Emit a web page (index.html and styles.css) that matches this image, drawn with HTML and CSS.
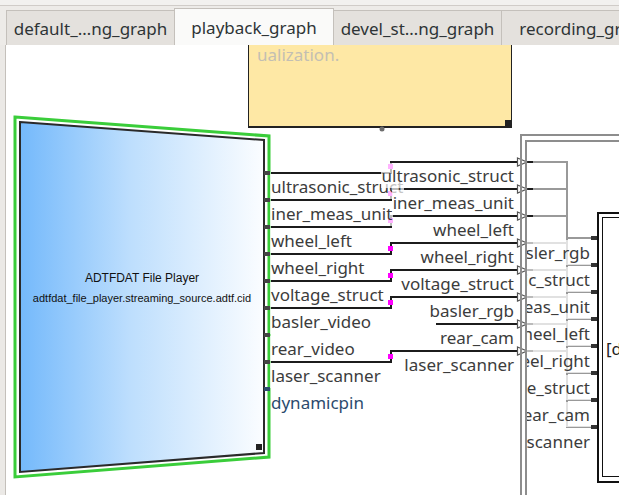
FILE: index.html
```html
<!DOCTYPE html>
<html lang="en">
<head>
  <meta charset="UTF-8">
  <title>playback_graph</title>
  <link rel="stylesheet" href="styles.css">
</head>
<body>
  <div class="window">
    <div class="topline"></div>

    <!-- Tabs -->
    <div class="tabbar">
      <div class="tab">default_…ng_graph</div>
      <div class="tab active">playback_graph</div>
      <div class="tab">devel_st…ng_graph</div>
      <div class="tab">recording_graph</div>
    </div>

    <!-- Graph canvas -->
    <div class="view">
      <div class="scene">
        <div class="note">
          <span class="note-text">ualization.</span>
          <span class="grip"></span>
        </div>

        <svg class="layer" width="619" height="495" viewBox="0 0 619 495">
          <defs>
            <linearGradient id="playerFill" x1="0" x2="1" y1="0" y2="0">
              <stop offset="0" stop-color="#74b9fb"/>
              <stop offset="0.45" stop-color="#bddefd"/>
              <stop offset="1" stop-color="#fbfdff"/>
            </linearGradient>
          </defs>

          <!-- player block -->
          <polygon points="15,117 269,136 269,457 15,477" fill="none" stroke="#3acd3a" stroke-width="3"/>
          <polygon points="20,122 264,140 264,453 20,472" fill="url(#playerFill)" stroke="#2a2a2a" stroke-width="2"/>
          <rect x="256" y="444" width="6" height="6" fill="#222"/>

          <!-- output pins -->
          <g fill="#444">
            <rect x="264" y="171" width="6" height="4"/>
            <rect x="264" y="198" width="6" height="4"/>
            <rect x="264" y="225" width="6" height="4"/>
            <rect x="264" y="252" width="6" height="4"/>
            <rect x="264" y="279" width="6" height="4"/>
            <rect x="264" y="306" width="6" height="4"/>
            <rect x="264" y="333" width="6" height="4"/>
            <rect x="264" y="360" width="6" height="4"/>
          </g>
          <rect x="264" y="387" width="6" height="4" fill="#2c4b6d"/>

          <!-- connections -->
          <g fill="none" stroke="#1c1c1c" stroke-width="2">
            <path d="M271 173H391V162H517"/>
            <path d="M271 200H391V189H517"/>
            <path d="M271 227H391V216H517"/>
            <path d="M271 254H391V243H517"/>
            <path d="M271 281H391V270H517"/>
            <path d="M271 308H391V297H517"/>
            <path d="M436 324H517"/>
            <path d="M271 362H391V351H517"/>
          </g>
          <g fill="#ff00ff">
            <rect x="388" y="164" width="5" height="5"/>
            <rect x="388" y="191" width="5" height="5"/>
            <rect x="388" y="218" width="5" height="5"/>
            <rect x="388" y="246" width="5" height="5"/>
            <rect x="388" y="273" width="5" height="5"/>
            <rect x="388" y="300" width="5" height="5"/>
            <rect x="388" y="354" width="5" height="5"/>
          </g>

          <!-- group input pins -->
          <g fill="none" stroke="#1c1c1c" stroke-width="2">
            <path d="M527 162H533M527 189H533M527 216H533M527 243H533M527 270H533M527 297H533M527 324H533M527 351H533"/>
          </g>
          <g fill="none" stroke="#555" stroke-width="1.2">
            <polygon points="517.5,158 527,162 517.5,166"/>
            <polygon points="517.5,185 527,189 517.5,193"/>
            <polygon points="517.5,212 527,216 517.5,220"/>
            <polygon points="517.5,239 527,243 517.5,247"/>
            <polygon points="517.5,266 527,270 517.5,274"/>
            <polygon points="517.5,293 527,297 517.5,301"/>
            <polygon points="517.5,320 527,324 517.5,328"/>
            <polygon points="517.5,347 527,351 517.5,355"/>
          </g>

          <!-- bus to inner block -->
          <g fill="none" stroke="#999" stroke-width="2">
            <path d="M533 162H567M533 189H567M533 216H567M533 243H567M533 270H567M533 297H567M533 324H567M533 351H567"/>
            <path d="M567 161V428"/>
            <path d="M567 238H591M567 265H591M567 292H591M567 319H591M567 346H591M567 373H591M567 400H591M567 427H591"/>
          </g>

          <circle cx="382" cy="129" r="2.5" fill="#6d6d6d"/>
        </svg>

        <div class="player-text">
          <span class="player-name">ADTFDAT File Player</span>
          <span class="player-cid">adtfdat_file_player.streaming_source.adtf.cid</span>
        </div>

        <div class="pins left">
          <span class="pin">ultrasonic_struct</span>
          <span class="pin">iner_meas_unit</span>
          <span class="pin">wheel_left</span>
          <span class="pin">wheel_right</span>
          <span class="pin">voltage_struct</span>
          <span class="pin">basler_video</span>
          <span class="pin">rear_video</span>
          <span class="pin">laser_scanner</span>
          <span class="pin dyn">dynamicpin</span>
        </div>

        <div class="pins mid">
          <span class="pin">ultrasonic_struct</span>
          <span class="pin">iner_meas_unit</span>
          <span class="pin">wheel_left</span>
          <span class="pin">wheel_right</span>
          <span class="pin">voltage_struct</span>
          <span class="pin">basler_rgb</span>
          <span class="pin">rear_cam</span>
          <span class="pin">laser_scanner</span>
        </div>

        <div class="pins right">
          <span class="pin">basler_rgb</span>
          <span class="pin">ultrasonic_struct</span>
          <span class="pin">iner_meas_unit</span>
          <span class="pin">wheel_left</span>
          <span class="pin">wheel_right</span>
          <span class="pin">voltage_struct</span>
          <span class="pin">rear_cam</span>
          <span class="pin">laser_scanner</span>
        </div>

        <div class="block-name">[d</div>

        <svg class="layer" width="619" height="495" viewBox="0 0 619 495">
          <!-- group frame -->
          <g fill="none" stroke="#8d8d8d" stroke-width="2">
            <path d="M521 495V135H619"/>
            <path d="M526 495V141H619"/>
          </g>
          <!-- inner block -->
          <rect x="598" y="213" width="40" height="269" fill="none" stroke="#111" stroke-width="2"/>
          <rect x="602.5" y="217.5" width="40" height="259" fill="none" stroke="#111" stroke-width="1"/>
          <g fill="#333">
            <rect x="591" y="236" width="6" height="4"/>
            <rect x="591" y="263" width="6" height="4"/>
            <rect x="591" y="290" width="6" height="4"/>
            <rect x="591" y="317" width="6" height="4"/>
            <rect x="591" y="344" width="6" height="4"/>
            <rect x="591" y="371" width="6" height="4"/>
            <rect x="591" y="398" width="6" height="4"/>
            <rect x="591" y="425" width="6" height="4"/>
          </g>
        </svg>
      </div>
    </div>
  </div>
</body>
</html>
```

FILE: styles.css
```css
* {
  margin: 0;
  padding: 0;
  box-sizing: border-box;
}

body {
  font-family: 'Noto Sans', sans-serif;
  width: 619px;
  height: 495px;
  overflow: hidden;
  background: #efedeb;
}

.window {
  display: flex;
  flex-direction: column;
  height: 495px;
}

.topline {
  height: 6px;
  background: #f2f1ef;
  border-bottom: 1px solid #d0ccc8;
}

/* Tabs */
.tabbar {
  height: 39px;
  display: flex;
  align-items: flex-end;
  padding-left: 6px;
  background: #edebe8;
}

.tab {
  flex-shrink: 0;
  width: 169px;
  height: 35px;
  display: flex;
  align-items: center;
  justify-content: center;
  border: 1px solid #c4c0bb;
  border-bottom: none;
  margin-right: -1px;
  background: #e4e1dd;
  color: #2e3436;
  font-size: 17px;
  white-space: nowrap;
}

.tab.active {
  width: 160px;
  height: 37px;
  background: #fafaf9;
  position: relative;
  z-index: 1;
}

/* Canvas */
.view {
  flex: 1;
  position: relative;
  overflow: hidden;
  background: #fff;
}

.view::before {
  content: '';
  position: absolute;
  left: 0;
  top: 0;
  bottom: 0;
  width: 5px;
  background: #ebe9e6;
  border-right: 1px solid #c4c0bb;
  z-index: 5;
}

.scene {
  position: absolute;
  left: 0;
  top: -45px;
  width: 619px;
  height: 495px;
}

.layer {
  position: absolute;
  left: 0;
  top: 0;
}

.note {
  position: absolute;
  left: 248px;
  top: 20px;
  width: 264px;
  height: 108px;
  background: #fee8a5;
  border: 1px solid #222;
  border-bottom-width: 2px;
}

.note-text {
  position: absolute;
  left: 8px;
  top: 22px;
  font-size: 17px;
  color: #c3bfb3;
}

.grip {
  position: absolute;
  right: 0;
  bottom: 0;
  width: 6px;
  height: 6px;
  background: #222;
}

.player-text {
  position: absolute;
  left: 20px;
  top: 270px;
  width: 244px;
  display: flex;
  flex-direction: column;
  align-items: center;
  gap: 4px;
  font-family: 'Liberation Sans', Arial, sans-serif;
  color: #111;
}

.player-name {
  font-size: 12px;
  line-height: 16px;
}

.player-cid {
  font-size: 11px;
  line-height: 16px;
}

/* Pin labels */
.pins {
  position: absolute;
  display: flex;
  flex-direction: column;
  gap: 2px;
}

.pin {
  height: 25px;
  line-height: 25px;
  padding: 0 1px;
  font-size: 17px;
  color: #3c3c3c;
  white-space: nowrap;
  background: rgba(255, 255, 255, 0.7);
}

.pins.left {
  left: 270px;
  top: 174px;
  align-items: flex-start;
}

.pins.mid {
  right: 104px;
  top: 163px;
  align-items: flex-end;
}

.pins.right {
  left: 527px;
  top: 240px;
  width: 64px;
  overflow: hidden;
  align-items: flex-end;
}

.pin.dyn {
  color: #2c4b6d;
  background: none;
}

.block-name {
  position: absolute;
  left: 606px;
  top: 337px;
  font-size: 17px;
  color: #222;
  white-space: nowrap;
}
```
